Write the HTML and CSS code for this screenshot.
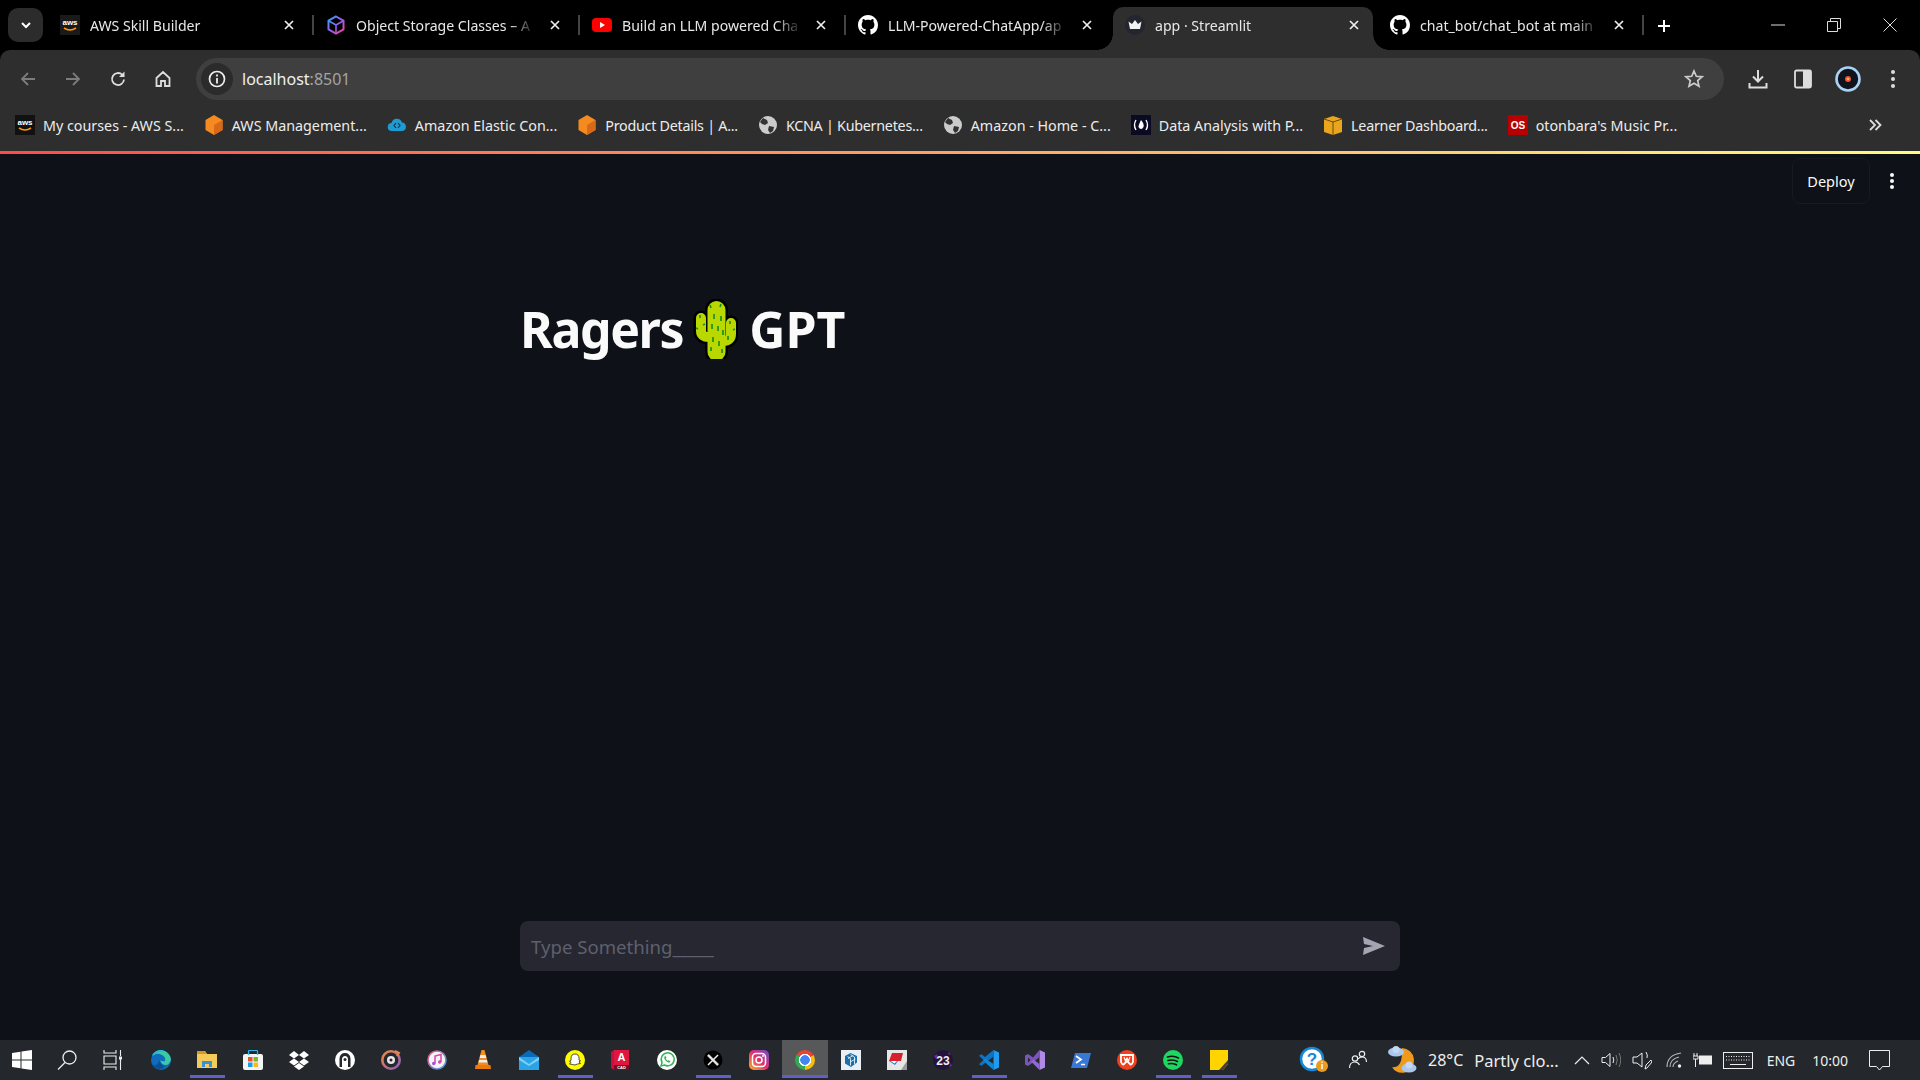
FILE: index.html
```html
<!DOCTYPE html>
<html lang="en">
<head>
  <meta charset="UTF-8">
  <title>app · Streamlit</title>
  <link rel="stylesheet" href="styles.css">
</head>
<body>
  <!-- browser tabs -->
  <div class="tabstrip">
    <div class="tab-menu"><svg width="14" height="14" viewBox="0 0 14 14"><path d="M3 5l4 4 4-4" fill="none" stroke="#fff" stroke-width="2"/></svg></div>

    <div class="tab">
      <svg class="favicon" viewBox="0 0 20 20"><rect width="20" height="20" fill="#1a1a1a"/><text x="10" y="10" class="aws-text" text-anchor="middle">aws</text><path d="M4 13q6 4 12 0" fill="none" stroke="#f90" stroke-width="1.6"/></svg>
      <span class="tab-title">AWS Skill Builder</span>
      <svg class="tab-close" viewBox="0 0 12 12"><path d="M2 2l8 8M10 2l-8 8" stroke="#eee" stroke-width="1.7"/></svg>
      <span class="tab-sep"></span>
    </div>
    <div class="tab">
      <svg class="favicon" viewBox="0 0 20 20"><path d="M10 1.5l7.500 4.200v8.600L10 18.500l-7.500-4.200V5.700z" fill="none" stroke="url(#cube)" stroke-width="2"/><path d="M2.500 5.700L10 10l7.500-4.300M10 10v8" fill="none" stroke="url(#cube)" stroke-width="1.6"/><defs><linearGradient id="cube" x1="0" y1="0" x2="1" y2="1"><stop offset="0" stop-color="#2ea3f2"/><stop offset=".5" stop-color="#9a5cf0"/><stop offset="1" stop-color="#f0468c"/></linearGradient></defs></svg>
      <span class="tab-title">Object Storage Classes – A</span>
      <svg class="tab-close" viewBox="0 0 12 12"><path d="M2 2l8 8M10 2l-8 8" stroke="#eee" stroke-width="1.7"/></svg>
      <span class="tab-sep"></span>
    </div>
    <div class="tab">
      <svg class="favicon" viewBox="0 0 20 20"><rect y="3" width="20" height="14" rx="4" fill="#f00"/><path d="M8 7l5 3-5 3z" fill="#fff"/></svg>
      <span class="tab-title">Build an LLM powered Cha</span>
      <svg class="tab-close" viewBox="0 0 12 12"><path d="M2 2l8 8M10 2l-8 8" stroke="#eee" stroke-width="1.7"/></svg>
      <span class="tab-sep"></span>
    </div>
    <div class="tab">
      <svg class="favicon" viewBox="0 0 16 16"><path fill="#fff" d="M8 0C3.580 0 0 3.580 0 8c0 3.540 2.290 6.530 5.470 7.590.4.070.55-.17.55-.38 0-.19-.01-.82-.01-1.490-2.010.37-2.530-.49-2.690-.94-.09-.23-.48-.94-.82-1.130-.28-.15-.68-.52-.01-.53.63-.01 1.080.58 1.230.82.720 1.210 1.870.87 2.330.66.070-.52.280-.87.510-1.070-1.780-.2-3.640-.89-3.640-3.950 0-.87.310-1.590.820-2.150-.08-.2-.36-1.020.08-2.120 0 0 .67-.21 2.200.82.640-.18 1.320-.27 2-.27s1.360.09 2 .27c1.530-1.040 2.200-.82 2.200-.82.440 1.100.160 1.920.080 2.120.510.560.820 1.270.820 2.150 0 3.070-1.870 3.750-3.650 3.950.290.250.540.730.540 1.480 0 1.070-.01 1.930-.01 2.200 0 .210.150.460.550.380A8.010 8.010 0 0 0 16 8c0-4.420-3.580-8-8-8z"/></svg>
      <span class="tab-title">LLM-Powered-ChatApp/ap</span>
      <svg class="tab-close" viewBox="0 0 12 12"><path d="M2 2l8 8M10 2l-8 8" stroke="#eee" stroke-width="1.7"/></svg>
    </div>
    <div class="tab tab-active">
      <svg class="favicon" viewBox="0 0 20 20"><circle cx="10" cy="10" r="10" fill="#23262e"/><path d="M3.500 6.500l3.500 2.500L10 5l3 4 3.500-2.500-1.500 7.500H5z" fill="#f2f2f2"/></svg>
      <span class="tab-title">app · Streamlit</span>
      <svg class="tab-close" viewBox="0 0 12 12"><path d="M2 2l8 8M10 2l-8 8" stroke="#eee" stroke-width="1.7"/></svg>
    </div>
    <div class="tab">
      <svg class="favicon" viewBox="0 0 16 16"><path fill="#fff" d="M8 0C3.580 0 0 3.580 0 8c0 3.540 2.290 6.530 5.470 7.590.4.070.55-.17.55-.38 0-.19-.01-.82-.01-1.490-2.010.37-2.530-.49-2.690-.94-.09-.23-.48-.94-.82-1.130-.28-.15-.68-.52-.01-.53.63-.01 1.080.58 1.230.82.720 1.210 1.870.87 2.330.66.070-.52.280-.87.510-1.070-1.780-.2-3.640-.89-3.640-3.950 0-.87.310-1.590.820-2.150-.08-.2-.36-1.020.08-2.120 0 0 .67-.21 2.200.82.640-.18 1.320-.27 2-.27s1.360.09 2 .27c1.530-1.040 2.200-.82 2.200-.82.440 1.100.160 1.920.080 2.120.510.560.820 1.270.820 2.150 0 3.070-1.870 3.750-3.650 3.950.290.250.540.730.540 1.480 0 1.070-.01 1.930-.01 2.200 0 .210.150.460.550.380A8.010 8.010 0 0 0 16 8c0-4.420-3.580-8-8-8z"/></svg>
      <span class="tab-title">chat_bot/chat_bot at main</span>
      <svg class="tab-close" viewBox="0 0 12 12"><path d="M2 2l8 8M10 2l-8 8" stroke="#eee" stroke-width="1.7"/></svg>
      <span class="tab-sep"></span>
    </div>
    <div class="new-tab"><svg width="14" height="14" viewBox="0 0 14 14"><path d="M7 1v12M1 7h12" stroke="#fff" stroke-width="2"/></svg></div>

    <div class="window-btns">
      <div class="window-btn"><svg width="14" height="14" viewBox="0 0 14 14"><path d="M0 7h14" stroke="#ddd"/></svg></div>
      <div class="window-btn"><svg width="14" height="14" viewBox="0 0 14 14"><path d="M.5 3.500h10v10H.5zM3.500 3.500v-3h10v10h-3" fill="none" stroke="#ddd"/></svg></div>
      <div class="window-btn"><svg width="14" height="14" viewBox="0 0 14 14"><path d="M.5.5l13 13M13.500.5l-13 13" stroke="#ddd"/></svg></div>
    </div>
  </div>

  <!-- address bar and bookmarks -->
  <div class="toolbar">
    <div class="nav-row">
      <div class="nav-btn"><svg width="18" height="18" viewBox="0 0 18 18"><path d="M16 9H3M9 3L3 9l6 6" fill="none" stroke="#7c7c7c" stroke-width="1.8"/></svg></div>
      <div class="nav-btn"><svg width="18" height="18" viewBox="0 0 18 18"><path d="M2 9h13M9 3l6 6-6 6" fill="none" stroke="#7c7c7c" stroke-width="1.8"/></svg></div>
      <div class="nav-btn"><svg width="18" height="18" viewBox="0 0 18 18"><path d="M15 9.500A6 6 0 1 1 13.200 4.700" fill="none" stroke="#ddd" stroke-width="1.8"/><path d="M15.500 1.500V7H10z" fill="#ddd"/></svg></div>
      <div class="nav-btn"><svg width="18" height="18" viewBox="0 0 18 18"><path d="M2.500 8L9 2l6.500 6v8H11v-5H7v5H2.500z" fill="none" stroke="#ddd" stroke-width="1.8"/></svg></div>
      <div class="address">
        <div class="site-info"><svg width="18" height="18" viewBox="0 0 18 18"><circle cx="9" cy="9" r="7.500" fill="none" stroke="#eee" stroke-width="1.7"/><path d="M9 8v5.500M9 4.500v2" stroke="#eee" stroke-width="1.8"/></svg></div>
        <span class="url">localhost<span class="url-port">:8501</span></span>
        <svg class="star" width="20" height="20" viewBox="0 0 20 20"><path d="M10 2l2.300 5.300 5.700.5-4.300 3.800 1.300 5.600L10 14.300l-5 2.900 1.300-5.600L2 7.800l5.700-.5z" fill="none" stroke="#ccc" stroke-width="1.7"/></svg>
      </div>
      <div class="nav-btn"><svg width="20" height="20" viewBox="0 0 20 20"><path d="M10 1v11M5 7.500l5 5 5-5M1.500 14v4.500h17V14" fill="none" stroke="#ddd" stroke-width="2"/></svg></div>
      <div class="nav-btn"><svg width="18" height="20" viewBox="0 0 18 20"><rect x="1" y="1.500" width="16" height="17" rx="1.500" fill="none" stroke="#ddd" stroke-width="1.8"/><rect x="9" y="1.500" width="8" height="17" fill="#ddd"/></svg></div>
      <div class="nav-btn"><svg width="26" height="26" viewBox="0 0 26 26"><circle cx="13" cy="13" r="11.500" fill="#10131c" stroke="#a9d3f5" stroke-width="2.600"/><circle cx="13" cy="13" r="3" fill="#f0503a"/><circle cx="13" cy="13" r="1.300" fill="#ffc04a"/></svg></div>
      <div class="nav-btn"><svg width="6" height="20" viewBox="0 0 6 20"><circle cx="3" cy="3" r="2" fill="#ddd"/><circle cx="3" cy="10" r="2" fill="#ddd"/><circle cx="3" cy="17" r="2" fill="#ddd"/></svg></div>
    </div>

    <div class="bookmarks">
      <div class="bookmark"><svg class="favicon" viewBox="0 0 20 20"><rect width="20" height="20" fill="#111"/><text x="10" y="10" class="aws-text" text-anchor="middle">aws</text><path d="M4 13q6 4 12 0" fill="none" stroke="#f90" stroke-width="1.6"/></svg>My courses - AWS S...</div>
      <div class="bookmark"><svg class="favicon" viewBox="0 0 20 20"><path d="M10 0l8.500 5v10L10 20l-8.500-5V5z" fill="#f58a1f"/><path d="M10 10l8.500-5v10L10 20z" fill="#d9691a"/></svg>AWS Management...</div>
      <div class="bookmark"><svg class="favicon" viewBox="0 0 20 20"><path d="M5 16a4 4 0 0 1-.5-8A5.500 5.500 0 0 1 15 7.500 4.300 4.300 0 0 1 15.500 16z" fill="#1e9bd1"/><path d="M9 8l-2 2.500L9 13M11 8l2 2.500L11 13" fill="none" stroke="#0d3550" stroke-width="1.2"/></svg>Amazon Elastic Con...</div>
      <div class="bookmark bookmark-tight"><svg class="favicon" viewBox="0 0 20 20"><path d="M10 0l8.500 5v10L10 20l-8.500-5V5z" fill="#f58a1f"/><path d="M10 10l8.500-5v10L10 20z" fill="#d9691a"/></svg>Product Details | A...</div>
      <div class="bookmark bookmark-tight"><svg class="favicon" viewBox="0 0 20 20"><circle cx="10" cy="10" r="9" fill="#ccc"/><path d="M5 3l4 2 1 3-3 2-3-1-2-2zM11 11l5 1-1 4-3 2-2-3z" fill="#333"/></svg>KCNA | Kubernetes...</div>
      <div class="bookmark"><svg class="favicon" viewBox="0 0 20 20"><circle cx="10" cy="10" r="9" fill="#ccc"/><path d="M5 3l4 2 1 3-3 2-3-1-2-2zM11 11l5 1-1 4-3 2-2-3z" fill="#333"/></svg>Amazon - Home - C...</div>
      <div class="bookmark"><svg class="favicon" viewBox="0 0 20 20"><rect width="20" height="20" fill="#0a0a23"/><path d="M5 5q-3 5 0 10M15 5q3 5 0 10" fill="none" stroke="#fff" stroke-width="1.4"/><path d="M10 5q3.500 4 2.500 7-1 2-2.500 2t-2.500-2q0-2 2.500-7z" fill="#fff"/></svg>Data Analysis with P...</div>
      <div class="bookmark bookmark-tight"><svg class="favicon" viewBox="0 0 20 20"><path d="M1 4l9-3 9 3v13l-9 3-9-3z" fill="#eaa51e"/><path d="M1 4l9 3 9-3M10 7v13" fill="none" stroke="#6b4a0c" stroke-width="1"/></svg>Learner Dashboard...</div>
      <div class="bookmark"><svg class="favicon" viewBox="0 0 20 20"><rect width="20" height="20" fill="#b90000"/><text x="10" y="13.500" class="lastfm-text" text-anchor="middle">OS</text></svg>otonbara's Music Pr...</div>
      <svg class="more-bookmarks" width="14" height="14" viewBox="0 0 14 14"><path d="M2 2l5 5-5 5M7.500 2l5 5-5 5" fill="none" stroke="#ddd" stroke-width="1.8"/></svg>
    </div>
  </div>

  <div class="accent-line"></div>

  <!-- streamlit app -->
  <main class="app">
    <div class="app-header">
      <button class="deploy">Deploy</button>
      <div class="app-menu"><svg width="6" height="18" viewBox="0 0 6 18"><circle cx="3" cy="3" r="2" fill="#fafafa"/><circle cx="3" cy="9" r="2" fill="#fafafa"/><circle cx="3" cy="15" r="2" fill="#fafafa"/></svg></div>
    </div>
    <div class="app-body">
      <h1 class="app-title">
        <span class="title-word">Ragers</span>
        <svg class="cactus" width="45" height="60" viewBox="0 0 45 60">
          <g fill="none" stroke="#000" stroke-linecap="round" stroke-linejoin="round">
            <path d="M23.500 11V53" stroke-width="23"/>
            <path d="M8 19v13q0 6 8 6" stroke-width="15"/>
            <path d="M38 24v11q0 7-8 7" stroke-width="15"/>
          </g>
          <g fill="none" stroke="#b9d800" stroke-linecap="round" stroke-linejoin="round">
            <path d="M23.500 11V53" stroke-width="18"/>
            <path d="M8 19v13q0 6 8 6" stroke-width="10"/>
            <path d="M38 24v11q0 7-8 7" stroke-width="10"/>
          </g>
          <path d="M18 9l-1-3M27 8l1-3M21 15v5M28 17v5M19 25v5M25 27v5M30 31v5M20 38v5M26 42v5M18 48v4M29 50v4M7 19v-3M10 26l2-1M5 30l-2-1M37 25v-3M40 31l2-1M35 37v4" stroke="#1f8f1f" stroke-width="1.7"/>
        </svg>
        <span>GPT</span>
      </h1>
      <div class="chat-input">
        <span class="placeholder">Type Something_____</span>
        <svg width="22" height="18" viewBox="0 0 22 18"><path d="M0 0l22 9L0 18l1-7 9-2-9-2z" fill="#a3a5b3"/></svg>
      </div>
    </div>
  </main>

  <!-- windows taskbar -->
  <footer class="taskbar">
    <div class="task task-start"><svg width="20" height="20" viewBox="0 0 20 20"><path d="M0 3l8.500-1.200v7.700H0zM9.500 1.600L20 0v9.500H9.500zM0 10.500h8.500v7.700L0 17zM9.500 10.500H20V20L9.500 18.400z" fill="#fff"/></svg></div>
    <div class="task"><svg width="20" height="20" viewBox="0 0 20 20"><circle cx="12.500" cy="7.500" r="6.500" fill="none" stroke="#eee" stroke-width="1.3"/><path d="M8 12.500L1 19.500" stroke="#eee" stroke-width="1.3"/></svg></div>
    <div class="task task-view"><svg width="20" height="20" viewBox="0 0 20 20"><path d="M1 0v3h12V0M1 20v-3h12v3M1 6h12v8H1zM17.500 0v6M17.500 9v11" fill="none" stroke="#eee" stroke-width="1.1"/><rect x="16" y="6.500" width="3" height="3" fill="#eee"/></svg></div>
    <div class="task"><svg width="20" height="20" viewBox="0 0 20 20"><circle cx="10" cy="10" r="10" fill="#0f6cbd"/><path d="M20 10a10 10 0 0 0-19-4q5-4 10-1 4 2 3 6-3 1-5-1 1 5 6 5 3 0 5-5z" fill="#3cc8a0"/><path d="M2 5Q6 0 12 1" fill="none" stroke="#2ab6d8" stroke-width="2"/><path d="M9 10q0 5 5 6-2 3-6 3-5-1-7-6 2 3 4 2 2-1 4-5z" fill="#0c4f94"/></svg></div>
    <div class="task task-on"><svg width="20" height="20" viewBox="0 0 20 20"><path d="M0 1h8l2 3h10v14H0z" fill="#f4ca59"/><path d="M0 1h8l2 3H0z" fill="#d8981f"/><path d="M5 17v-6h10v6h-3v-3H8v3z" fill="#3a8fd6"/></svg></div>
    <div class="task"><svg width="20" height="20" viewBox="0 0 20 20"><rect y="4" width="20" height="16" rx="2" fill="#f4f4f4"/><path d="M5.500 5V1.500q0-1 1-1h7q1 0 1 1V5" fill="none" stroke="#2fb6e8" stroke-width="1.2"/><rect x="5" y="7" width="4.500" height="4.500" fill="#e8512a"/><rect x="10.500" y="7" width="4.500" height="4.500" fill="#76b82a"/><rect x="5" y="12.500" width="4.500" height="4.500" fill="#14a0e6"/><rect x="10.500" y="12.500" width="4.500" height="4.500" fill="#fdb813"/></svg></div>
    <div class="task"><svg width="20" height="20" viewBox="0 0 20 20"><path d="M5 1L0 5l5 3.500L10 5zM15 1l-5 4 5 3.500L20 5zM5 8.500L0 12l5 3.500 5-3.500zM15 8.500L10 12l5 3.500 5-3.500zM5 16.500L10 20l5-3.500-5-3.500z" fill="#fff"/></svg></div>
    <div class="task"><svg width="20" height="20" viewBox="0 0 20 20"><circle cx="10" cy="10" r="10" fill="#fff"/><path d="M4.500 17V8.500Q5 3 10 3t5.500 5.500V17H13V9q-.5-3-3-3T7 9v8z" fill="#24282c"/><circle cx="10" cy="9.500" r="1.500" fill="#24282c"/></svg></div>
    <div class="task"><svg width="20" height="20" viewBox="0 0 20 20"><circle cx="10" cy="10" r="8.700" fill="none" stroke="url(#groove)" stroke-width="2.6"/><circle cx="10" cy="10" r="4" fill="#e6e6e6"/><circle cx="10" cy="10" r="1.500" fill="#24282c"/><path d="M14 1l4 2-2 3" fill="none" stroke="#e8834a" stroke-width="2"/><defs><linearGradient id="groove" x1="0" y1="0" x2="1" y2="1"><stop offset="0" stop-color="#f08a3c"/><stop offset="1" stop-color="#8a5cc8"/></linearGradient></defs></svg></div>
    <div class="task"><svg width="20" height="20" viewBox="0 0 20 20"><circle cx="10" cy="10" r="9" fill="#f4f4f6" stroke="url(#tunes)" stroke-width="1.6"/><path d="M8 13.500V6l6-1.500V12" fill="none" stroke="#d546a8" stroke-width="1.5"/><circle cx="6.700" cy="13.500" r="1.700" fill="#a84ed8"/><circle cx="12.700" cy="12" r="1.700" fill="#d546a8"/><defs><linearGradient id="tunes" x1="0" y1="0" x2="1" y2="1"><stop offset="0" stop-color="#f0557a"/><stop offset="1" stop-color="#3aa0e8"/></linearGradient></defs></svg></div>
    <div class="task"><svg width="20" height="20" viewBox="0 0 20 20"><path d="M8.500 0h3l4 15h-11z" fill="#f58a1f"/><path d="M7.500 5h5l.8 3H6.700zM6.200 10h7.600l.7 2.500h-9z" fill="#eee"/><path d="M2.500 15h15l.5 4H2z" fill="#e87a10"/></svg></div>
    <div class="task"><svg width="20" height="20" viewBox="0 0 20 20"><path d="M0 7l10-7 10 7z" fill="#0a6ab8"/><rect y="7" width="20" height="13" fill="#2aa4e6"/><path d="M0 7l10 7 10-7v3l-10 6L0 10z" fill="#7cd0f5"/></svg></div>
    <div class="task task-on"><svg width="20" height="20" viewBox="0 0 20 20"><circle cx="10" cy="10" r="10" fill="#fffc00"/><path d="M10 4q4 0 4 4.500V10l1.500.8-1.500 1 1.500 1.700-3 .5L10 15l-2.500-.5-3-.5L6 12.300l-1.500-1L6 10.500v-2Q6 4 10 4z" fill="#fff" stroke="#222" stroke-width=".8"/></svg></div>
    <div class="task"><svg width="20" height="20" viewBox="0 0 20 20"><path d="M0 2l3-2h15v20H3l-3-2z" fill="#c8103c"/><path d="M3 15V0h15v15z" fill="#e0163f"/><path d="M3 15h15v5H3z" fill="#7a0a24"/><text x="10.500" y="11" class="acad-letter" text-anchor="middle">A</text><text x="10.500" y="18.800" class="acad-small" text-anchor="middle">CAD</text></svg></div>
    <div class="task"><svg width="20" height="20" viewBox="0 0 20 20"><circle cx="10" cy="10" r="10" fill="#fff"/><path d="M4 16l1-3.500A6.500 6.500 0 1 1 7.500 15z" fill="none" stroke="#2fb457" stroke-width="1.5"/><path d="M7.500 6.500q-1 1.500.8 3.800t4 2.400l1.200-1.500-1.800-1-1 .6q-1.500-.8-2-2.200l.7-.8-.8-1.800z" fill="#2fb457"/></svg></div>
    <div class="task task-on"><svg width="20" height="20" viewBox="0 0 20 20"><circle cx="10" cy="10" r="9.500" fill="#000"/><path d="M5 5l10 10M15 5L5 15" stroke="#eee" stroke-width="1.5"/><path d="M5 5l10 10" stroke="#eee" stroke-width="2.6" opacity=".7"/></svg></div>
    <div class="task"><svg width="20" height="20" viewBox="0 0 20 20"><defs><linearGradient id="insta" x1="0" y1="1" x2="1" y2="0"><stop offset="0" stop-color="#fdb52c"/><stop offset=".5" stop-color="#e1306c"/><stop offset="1" stop-color="#6a4ad8"/></linearGradient></defs><rect width="20" height="20" rx="5" fill="url(#insta)"/><rect x="3.500" y="3.500" width="13" height="13" rx="3.500" fill="none" stroke="#fff" stroke-width="1.5"/><circle cx="10" cy="10" r="3" fill="none" stroke="#fff" stroke-width="1.5"/><circle cx="14" cy="6" r="1" fill="#fff"/></svg></div>
    <div class="task task-active"><div class="chrome-logo"></div></div>
    <div class="task"><svg width="20" height="20" viewBox="0 0 20 20"><rect width="20" height="20" fill="#e8f0f6"/><path d="M4 6l5.500-3L16 6v6.500L10 17l-6-3.500z" fill="#1c6fa8"/><path d="M6.500 6.500l3 2v7M9.500 4.500l4 2.500v7M12 5.500l-5 3M14.500 9l-5 2.800" fill="none" stroke="#e8f0f6" stroke-width=".9"/></svg></div>
    <div class="task"><svg width="20" height="20" viewBox="0 0 20 20"><rect width="20" height="20" fill="#e6e6e6"/><path d="M14 20l6-9v9z" fill="#9a9a9a"/><path d="M5 3h11l-2 8H2z" fill="#d8202c"/><path d="M2 11h9l-3 4z" fill="#2a78c8"/><path d="M3.500 11H10l-2.500 2.500z" fill="#fff"/></svg></div>
    <div class="task"><svg width="20" height="20" viewBox="0 0 20 20"><circle cx="10" cy="10" r="10" fill="#241338"/><path d="M1 6l3-2 1 3-2 2zM18 13l1 3-3 1zM16 2l2 3-3-1z" fill="#5a2ea0"/><text x="10" y="15" class="num-badge" text-anchor="middle">23</text></svg></div>
    <div class="task task-on"><svg width="20" height="20" viewBox="0 0 20 20"><path d="M14.500 0L20 2.500v15L14.500 20z" fill="#1f9cf0"/><path d="M14.500 0v6.500L6 13l-3.500 2.800L0 14.200 4.500 10 0 5.800l2.500-1.600L6 7z" fill="#0e74c4"/><path d="M14.500 20L4 10.500l2.200-2 8.300 5.500z" fill="#0e86d8"/></svg></div>
    <div class="task"><svg width="20" height="20" viewBox="0 0 20 20"><path d="M14.500 0L20 2.500v15L14.500 20z" fill="#b08ae6"/><path d="M14.500 0v7L8 12.500 3 16l-3-1.500v-9L3 4l5 3.500zM3 7.500v5L5.500 10z" fill="#7a55b8"/><path d="M14.500 20L6 11.500l2.500-2 6 4.500z" fill="#9068d0"/></svg></div>
    <div class="task"><svg width="20" height="20" viewBox="0 0 20 20"><path d="M4 3h16l-4 15H0z" fill="#3a78d8"/><path d="M5 6l5 3.500L5 13" fill="none" stroke="#fff" stroke-width="1.7"/><path d="M10 14.500h4" stroke="#fff" stroke-width="1.5"/></svg></div>
    <div class="task"><svg width="20" height="20" viewBox="0 0 20 20"><circle cx="10" cy="10" r="10" fill="#f0401e"/><path d="M4 5h12v7q-1 2.500-2.500 2.500L10 11l-3.500 3.500Q5 14.500 4 12z" fill="none" stroke="#fff" stroke-width="1.8"/><path d="M7 7l1.500 4L10 8l1.500 3L13 7" fill="none" stroke="#fff" stroke-width="1.2"/></svg></div>
    <div class="task task-on"><svg width="20" height="20" viewBox="0 0 20 20"><circle cx="10" cy="10" r="10" fill="#1ed760"/><path d="M4.500 7q6-1.800 11 1M5 10.500q5-1.500 9.500 1M5.500 13.800q4-1 8 1" fill="none" stroke="#111" stroke-width="1.6" stroke-linecap="round"/></svg></div>
    <div class="task task-on"><svg width="20" height="20" viewBox="0 0 20 20"><path d="M1 0h18v14l-5 6H1z" fill="#ffd400"/><path d="M19 10v4l-5 6h-4z" fill="#4a4034"/></svg></div>

    <div class="tray">
      <div class="tray-cell tray-help"><svg width="30" height="28" viewBox="0 0 30 28"><circle cx="13" cy="13" r="11" fill="#fff" stroke="#1589d8" stroke-width="2.5"/><text x="13" y="19" class="help-mark" text-anchor="middle">?</text><circle cx="23" cy="20" r="6" fill="#f09a1c"/><path d="M23 18v5M23 15.500v1.300" stroke="#fff" stroke-width="1.5"/></svg></div>
      <div class="tray-cell"><svg width="20" height="20" viewBox="0 0 20 20"><circle cx="7" cy="8.500" r="2.700" fill="none" stroke="#eee" stroke-width="1.2"/><path d="M1.500 18q0-6 5.500-6 3 0 4.500 3" fill="none" stroke="#eee" stroke-width="1.2"/><circle cx="14" cy="4" r="2.700" fill="none" stroke="#eee" stroke-width="1.2"/><path d="M10 9q1.500-2 4-2 4.500 0 4.500 5" fill="none" stroke="#eee" stroke-width="1.2"/></svg></div>
      <div class="tray-cell tray-weather"><svg width="30" height="30" viewBox="0 0 30 30"><path d="M15 3a12.500 12.500 0 0 1 3 24.500Q9 29 5 22q11 2 10-19z" fill="#f09a1c"/><ellipse cx="9" cy="7" rx="8" ry="4.500" fill="#a9c8ec"/><circle cx="9" cy="4.500" r="3.500" fill="#c3d9f2"/><ellipse cx="22" cy="23" rx="7.500" ry="4.500" fill="#a9c8ec"/><circle cx="22" cy="20" r="3.500" fill="#c3d9f2"/></svg></div>
      <span class="tray-temp">28°C</span>
      <span class="tray-forecast">Partly clo...</span>
      <svg class="tray-chevron" width="16" height="10" viewBox="0 0 16 10"><path d="M1 9l7-7 7 7" fill="none" stroke="#eee" stroke-width="1.2"/></svg>
      <svg class="tray-speaker" width="20" height="16" viewBox="0 0 20 16"><path d="M1 5.500h3.500L9 1.500v13l-4.500-4H1z" fill="none" stroke="#eee"/><path d="M12 5q1.500 3 0 6" fill="none" stroke="#eee"/><path d="M15 3q2.500 5 0 10M18 1q3.500 7 0 14" fill="none" stroke="#777"/></svg>
      <svg class="tray-pen" width="20" height="20" viewBox="0 0 20 20"><path d="M1 7h4l5-4v14l-5-4H1z" fill="none" stroke="#eee"/><path d="M13 19l1-4 5-5 1 2-5 6zM14 2q2 3 1 6" fill="none" stroke="#eee"/></svg>
      <svg class="tray-wifi" width="16" height="16" viewBox="0 0 16 16"><path d="M1 15Q1 3 15 1M4 15q0-8 9-10M7 15q0-4 5-6" fill="none" stroke="#bbb" stroke-width="1.1"/><circle cx="13.500" cy="14" r="1.700" fill="#eee"/></svg>
      <svg class="tray-battery" width="20" height="14" viewBox="0 0 20 14"><path d="M1 0v3M4 0v3M0 3h5v3H0zM2.500 6v8" stroke="#eee" fill="none"/><rect x="6" y="2.500" width="13" height="9" fill="#eee"/></svg>
      <svg class="tray-keyboard" width="30" height="17" viewBox="0 0 30 17"><rect x=".5" y=".5" width="29" height="16" fill="none" stroke="#eee"/><path d="M3 4.500h24M3 8h24" stroke="#eee" stroke-dasharray="1 1.500"/><path d="M7 12.500h16" stroke="#eee"/></svg>
      <span class="tray-lang">ENG</span>
      <span class="tray-time">10:00</span>
      <svg class="tray-notify" width="21" height="21" viewBox="0 0 21 21"><path d="M.5.5h20v16h-7l-3 3.500-3-3.500h-7z" fill="none" stroke="#eee"/></svg>
    </div>
  </footer>
</body>
</html>
```

FILE: styles.css
```css
* {
  box-sizing: border-box;
}

html, body {
  margin: 0;
  height: 100%;
}

body {
  width: 1920px;
  height: 1080px;
  overflow: hidden;
  display: flex;
  flex-direction: column;
  background: #000;
  color: #eee;
  font-family: "Noto Sans", "Liberation Sans", sans-serif;
}

svg {
  flex: none;
  display: block;
}

.favicon {
  width: 20px;
  height: 20px;
  flex: none;
}

.aws-text {
  font: 700 8px "Liberation Sans", sans-serif;
  fill: #fff;
}

.lastfm-text {
  font: 700 10px "Liberation Sans", sans-serif;
  fill: #fff;
}

/* tabs */
.tabstrip {
  height: 50px;
  display: flex;
  padding-left: 8px;
  flex: none;
}

.tab-menu {
  width: 35px;
  height: 34px;
  margin: 8px 6px 0 0;
  background: #2c2c2c;
  border-radius: 10px;
  display: flex;
  align-items: center;
  justify-content: center;
}

.tab {
  width: 266px;
  height: 43px;
  margin-top: 7px;
  padding: 0 0 7px 11px;
  display: flex;
  align-items: center;
  position: relative;
  font-size: 14.1px;
  color: #e8e8e8;
}

.tab-title {
  width: 180px;
  margin-left: 10px;
  white-space: nowrap;
  -webkit-mask-image: linear-gradient(90deg, #000 85%, transparent);
  mask-image: linear-gradient(90deg, #000 85%, transparent);
}

.tab-close {
  width: 12px;
  height: 12px;
  margin-left: 13px;
}

.tab-sep {
  width: 2px;
  height: 20px;
  margin-left: 17px;
  background: #444;
}

.tab-active {
  width: 260px;
  margin-right: 6px;
  background: #2e2e2e;
  border-radius: 10px 10px 0 0;
  padding-left: 12px;
}

.tab-active::before,
.tab-active::after {
  content: "";
  position: absolute;
  bottom: 0;
  width: 16px;
  height: 16px;
}

.tab-active::before {
  left: -16px;
  background: radial-gradient(circle at 0 0, transparent 15.5px, #2e2e2e 16px);
}

.tab-active::after {
  right: -16px;
  background: radial-gradient(circle at 100% 0, transparent 15.5px, #2e2e2e 16px);
}

.new-tab {
  margin: 19px 0 0 12px;
}

.window-btns {
  margin-left: auto;
  margin-right: 2px;
  display: flex;
}

.window-btn {
  width: 56px;
  height: 50px;
  display: flex;
  justify-content: center;
  padding-top: 18px;
}

/* toolbar */
.toolbar {
  height: 101px;
  flex: none;
  background: #2e2e2e;
  border-radius: 10px 10px 0 0;
}

.nav-row {
  height: 58px;
  padding: 8px 5px 0;
  display: flex;
  align-items: flex-start;
}

.nav-btn {
  width: 45px;
  height: 42px;
  display: flex;
  align-items: center;
  justify-content: center;
}

.address {
  flex: 1;
  height: 42px;
  margin: 0 11px;
  padding: 0 20px 0 5px;
  display: flex;
  align-items: center;
  background: #3f3f3f;
  border-radius: 21px;
}

.site-info {
  width: 32px;
  height: 32px;
  background: #2b2b2b;
  border-radius: 50%;
  display: flex;
  align-items: center;
  justify-content: center;
}

.url {
  margin-left: 9px;
  font-size: 16px;
  color: #f0f0f0;
}

.url-port {
  color: #a4a4a4;
}

.star {
  margin-left: auto;
}

.bookmarks {
  height: 34px;
  padding: 0 0 0 15px;
  display: flex;
  align-items: center;
  gap: 20px;
}

.bookmark {
  display: flex;
  align-items: center;
  gap: 8px;
  font-size: 14.3px;
  color: #ececec;
  white-space: nowrap;
}

.bookmark-tight {
  letter-spacing: -.25px;
}

.more-bookmarks {
  margin-left: auto;
  margin-right: 38px;
}

.accent-line {
  height: 3px;
  flex: none;
  background: linear-gradient(90deg, #ff4b4b, #fffd80);
}

/* app */
.app {
  flex: 1;
  display: flex;
  flex-direction: column;
  background: #0e1117;
}

.app-header {
  padding: 4px 6px 0 0;
  display: flex;
  justify-content: flex-end;
  align-items: center;
}

.deploy {
  width: 78px;
  height: 46px;
  background: transparent;
  border: 1px solid #161a21;
  border-radius: 8px;
  font: 14.5px "Noto Sans", sans-serif;
  color: #fafafa;
}

.app-menu {
  width: 44px;
  display: flex;
  justify-content: center;
}

.app-body {
  flex: 1;
  width: 880px;
  margin: 0 auto;
  display: flex;
  flex-direction: column;
}

.app-title {
  margin: 95px 0 0;
  display: flex;
  align-items: center;
  font-size: 50px;
  line-height: 60px;
  font-weight: 700;
  color: #fafafa;
}

.title-word {
  letter-spacing: -1.4px;
}

.cactus {
  margin: 0 11px 0 10px;
}

.chat-input {
  margin: auto 0 69px;
  height: 50px;
  padding: 0 15px 0 11px;
  display: flex;
  align-items: center;
  justify-content: space-between;
  background: #262730;
  border-radius: 8px;
}

.placeholder {
  font-size: 18.6px;
  color: #5e606e;
}

/* taskbar */
.taskbar {
  height: 40px;
  flex: none;
  display: flex;
  background: #24282c;
}

.task {
  width: 46px;
  height: 38px;
  padding-top: 1px;
  display: flex;
  align-items: center;
  justify-content: center;
}

.task-start {
  width: 44px;
}

.task-view {
  margin-right: 2px;
}

.task-on {
  background: linear-gradient(#6060c8, #6060c8) center bottom / 35px 3px no-repeat;
}

.task-active {
  background: linear-gradient(#6060c8, #6060c8) center bottom / 100% 3px no-repeat, #57585a;
}

.chrome-logo {
  width: 20px;
  height: 20px;
  border-radius: 50%;
  background:
    radial-gradient(circle, #4285f4 0 4.5px, #fff 5px 6px, transparent 6.5px),
    conic-gradient(from -60deg, #ea4335 0 120deg, #fbbc05 120deg 240deg, #34a853 240deg 360deg);
}

.acad-letter {
  font: 700 11px "Liberation Sans", sans-serif;
  fill: #fff;
}

.acad-small {
  font: 700 4px "Liberation Sans", sans-serif;
  fill: #fff;
}

.num-badge {
  font: 700 12px "Liberation Sans", sans-serif;
  fill: #eee;
}

.help-mark {
  font: 700 17px "Liberation Sans", sans-serif;
  fill: #1589d8;
}

.tray {
  margin-left: auto;
  width: 630px;
  display: flex;
  align-items: center;
  font-size: 15px;
  color: #eee;
  white-space: nowrap;
}

.tray-cell {
  width: 45px;
  display: flex;
  justify-content: center;
}

.tray-help {
  padding-left: 3px;
}

.tray-weather {
  width: 44px;
}

.tray-temp {
  margin-left: 4px;
  font-size: 16px;
}

.tray-forecast {
  margin-left: 11px;
  font-size: 16.5px;
}

.tray-chevron {
  margin-left: 15px;
}

.tray-speaker {
  margin-left: 11px;
}

.tray-pen {
  margin-left: 11px;
}

.tray-wifi {
  margin-left: 14px;
}

.tray-battery {
  margin-left: 11px;
}

.tray-keyboard {
  margin-left: 10px;
}

.tray-lang {
  margin-left: 14px;
  font-size: 14px;
}

.tray-time {
  margin-left: 17px;
  font-size: 14px;
}

.tray-notify {
  margin-left: 21px;
}
```
